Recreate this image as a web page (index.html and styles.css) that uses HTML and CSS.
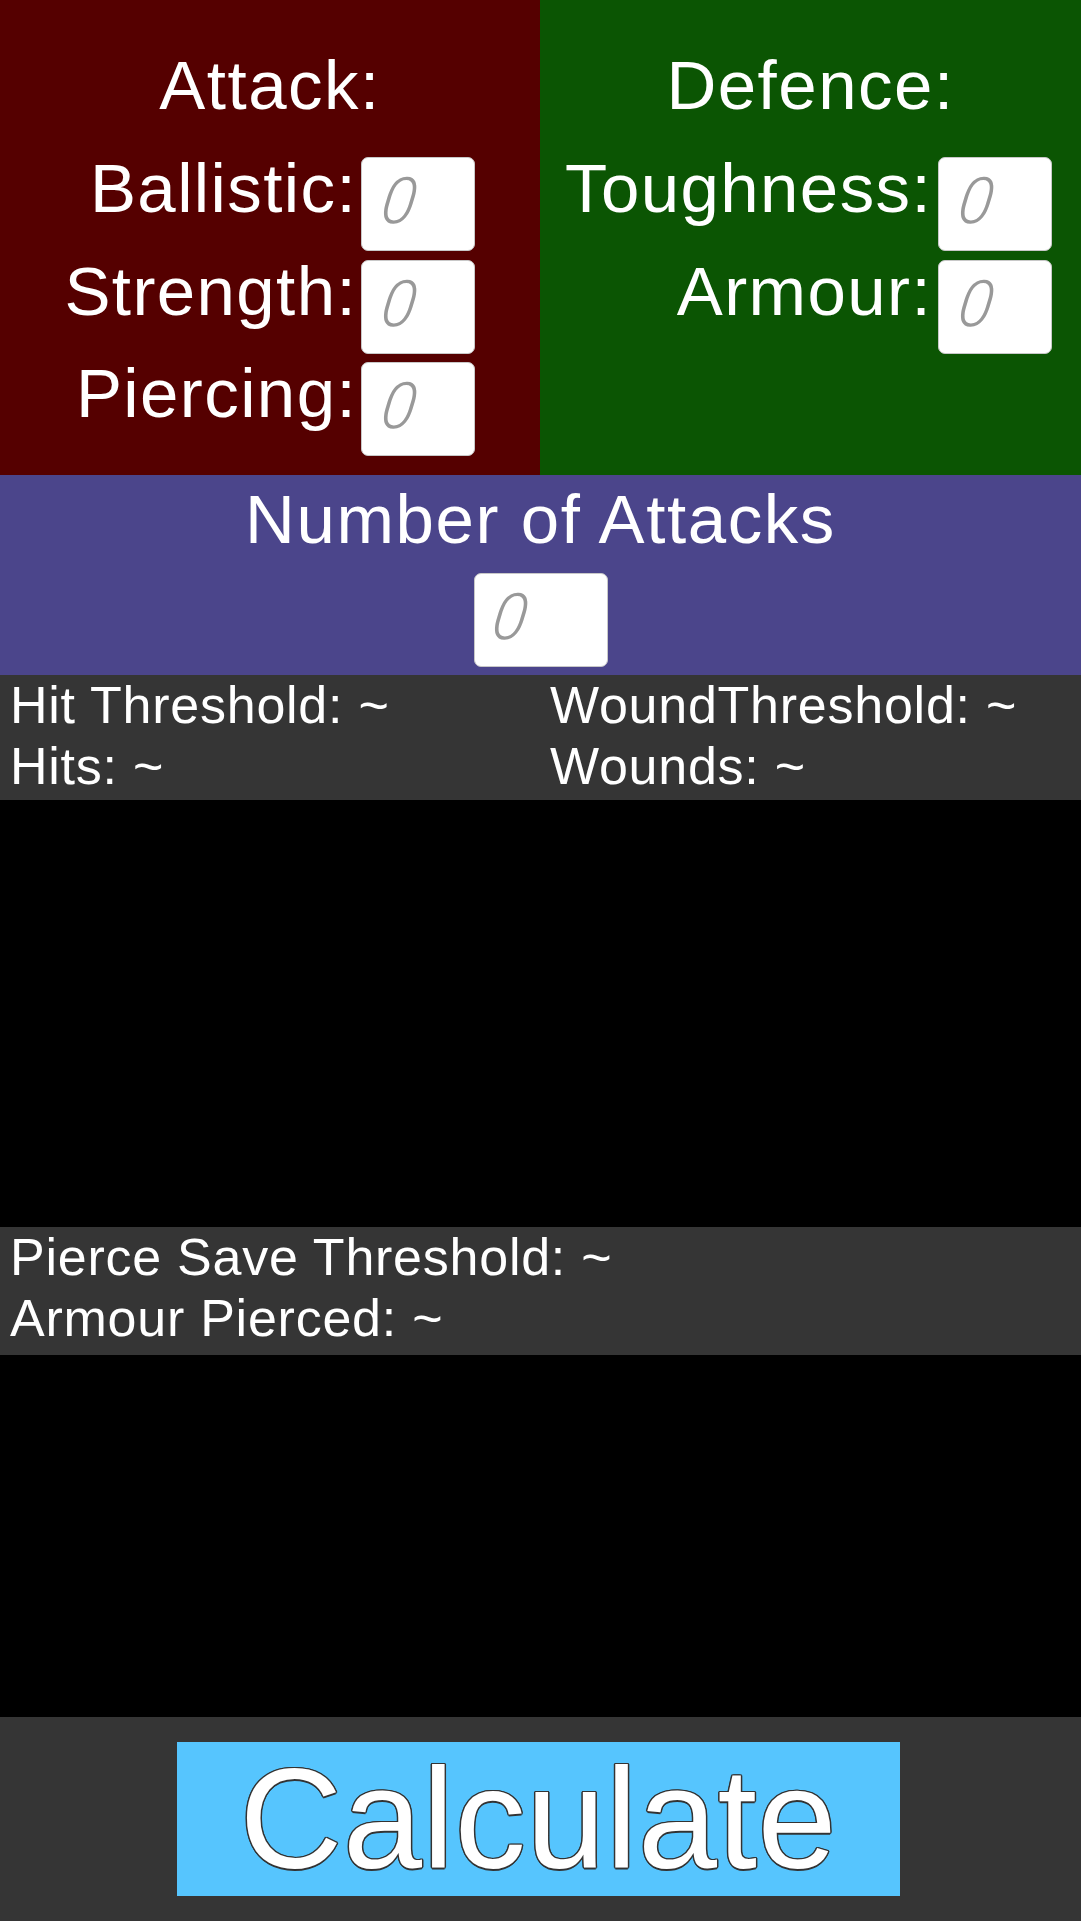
FILE: index.html
```html
<!DOCTYPE html>
<html>
<head>
<meta charset="utf-8">
<link rel="stylesheet" href="styles.css">
</head>
<body>
<div class="app">
  <section class="stats">
    <div class="half attack">
      <div class="title">Attack:</div>
      <div class="rows">
        <div class="row"><span class="label">Ballistic:</span><div class="field"><span class="ph">0</span></div></div>
        <div class="row"><span class="label">Strength:</span><div class="field"><span class="ph">0</span></div></div>
        <div class="row"><span class="label">Piercing:</span><div class="field"><span class="ph">0</span></div></div>
      </div>
    </div>
    <div class="half defence">
      <div class="title">Defence:</div>
      <div class="rows">
        <div class="row"><span class="label">Toughness:</span><div class="field"><span class="ph">0</span></div></div>
        <div class="row"><span class="label">Armour:</span><div class="field"><span class="ph">0</span></div></div>
      </div>
    </div>
  </section>
  <section class="attacks">
    <div class="title">Number of Attacks</div>
    <div class="field wide"><span class="ph">0</span></div>
  </section>
  <section class="results two">
    <div class="col">
      <div class="line">Hit Threshold: ~</div>
      <div class="line">Hits: ~</div>
    </div>
    <div class="col">
      <div class="line">WoundThreshold: ~</div>
      <div class="line">Wounds: ~</div>
    </div>
  </section>
  <div class="gap gap1"></div>
  <section class="results one">
    <div class="col">
      <div class="line">Pierce Save Threshold: ~</div>
      <div class="line">Armour Pierced: ~</div>
    </div>
  </section>
  <div class="gap gap2"></div>
  <section class="footer">
    <div class="button">Calculate</div>
  </section>
</div>
</body>
</html>
```
FILE: styles.css
```css
html, body {
  margin: 0;
  padding: 0;
  background: #000;
}
body {
  font-family: "Liberation Sans", Arial, sans-serif;
  color: #fff;
}
.app {
  width: 1081px;
  height: 1921px;
  display: flex;
  flex-direction: column;
  background: #000;
}
.stats {
  height: 475px;
  display: grid;
  grid-template-columns: 540px 541px;
}
.half {
  display: flex;
  flex-direction: column;
  padding-top: 46px;
}
.attack { background: #550000; }
.defence { background: #0b5503; }
.title {
  font-size: 69px;
  line-height: 80px;
  letter-spacing: 1.5px;
  text-align: center;
}
.rows {
  margin-top: 31px;
  display: flex;
  flex-direction: column;
  gap: 8.5px;
}
.row {
  display: flex;
  justify-content: flex-end;
  align-items: flex-start;
  height: 94px;
}
.attack .row { padding-right: 65px; gap: 4px; }
.defence .row { padding-right: 29px; gap: 6px; }
.label {
  font-size: 69px;
  line-height: 64px;
  letter-spacing: 1.4px;
}
.field {
  width: 114px;
  height: 94px;
  box-sizing: border-box;
  background: #fff;
  border: 1px solid #c8c8c8;
  border-radius: 7px;
  display: flex;
  align-items: center;
  padding-left: 20px;
}
.field.wide { width: 134px; padding-left: 18px; }
.ph {
  font-family: Roboto, "Liberation Sans", sans-serif;
  font-weight: 300;
  font-size: 64px;
  font-style: italic;
  color: #999;
  line-height: 1;
  margin-top: -4px;
  display: inline-block;
  transform: skewX(-8deg);
}
.attacks {
  height: 200px;
  background: #4b458b;
  display: flex;
  flex-direction: column;
  align-items: center;
  padding-top: 5px;
  box-sizing: border-box;
}
.attacks .title { letter-spacing: 1.6px; }
.attacks .field { margin-top: 13px; }
.results {
  background: #353535;
  display: grid;
  box-sizing: border-box;
}
.results.two {
  height: 125px;
  grid-template-columns: 540px 541px;
}
.results.one {
  height: 128px;
  grid-template-columns: 1fr;
}
.col { padding-left: 10px; }
.line {
  font-size: 52px;
  line-height: 61px;
  letter-spacing: 0.75px;
  white-space: nowrap;
}
.gap1 { height: 427px; }
.gap2 { height: 362px; }
.footer {
  flex: 1;
  background: #353535;
  display: flex;
  justify-content: center;
  align-items: flex-start;
  padding-top: 25px;
  padding-right: 4px;
}
.button {
  width: 723px;
  height: 154px;
  background: #56c5fe;
  font-size: 142px;
  line-height: 154px;
  letter-spacing: 0.6px;
  text-align: center;
  color: #fff;
  text-shadow: 1.5px 0 0 #333, -1.5px 0 0 #333, 0 1.5px 0 #333, 0 -1.5px 0 #333,
    1px 1px 0 #333, -1px -1px 0 #333, 1px -1px 0 #333, -1px 1px 0 #333;
}
```
